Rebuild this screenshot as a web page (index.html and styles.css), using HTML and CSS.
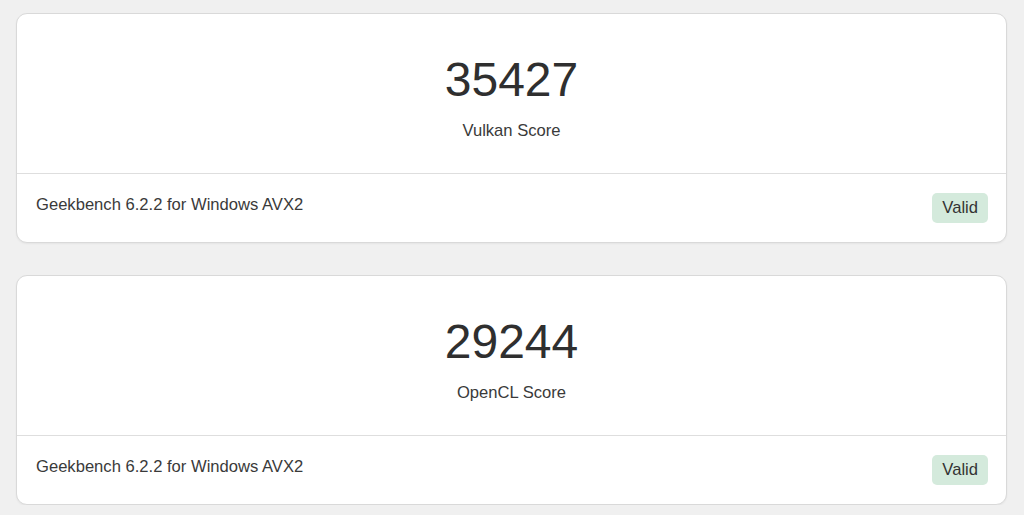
FILE: index.html
```html
<!DOCTYPE html>
<html>
<head>
<meta charset="utf-8">
<link rel="stylesheet" href="styles.css">
</head>
<body>
<div class="page">
  <div class="card">
    <div class="card-head">
      <div class="score">35427</div>
      <div class="label">Vulkan Score</div>
    </div>
    <div class="card-foot">
      <div class="version">Geekbench 6.2.2 for Windows AVX2</div>
      <div class="badge">Valid</div>
    </div>
  </div>
  <div class="card">
    <div class="card-head">
      <div class="score">29244</div>
      <div class="label">OpenCL Score</div>
    </div>
    <div class="card-foot">
      <div class="version">Geekbench 6.2.2 for Windows AVX2</div>
      <div class="badge">Valid</div>
    </div>
  </div>
</div>
</body>
</html>
```

FILE: styles.css
```css
html, body {
  margin: 0;
  padding: 0;
  background: #f0f0f0;
  font-family: "Liberation Sans", Arial, sans-serif;
  color: #333;
}
.page {
  padding: 13px 17px 0 16px;
  display: flex;
  flex-direction: column;
  gap: 32px;
}
.card {
  width: 991px;
  box-sizing: border-box;
  background: #fff;
  border: 1px solid #d9d9d9;
  border-radius: 11px;
  box-shadow: 0 1px 2px rgba(0,0,0,0.05);
}
.card-head {
  padding: 42px 0 32px;
  text-align: center;
  border-bottom: 1px solid #dedede;
}
.score {
  font-size: 48px;
  line-height: 48px;
  color: #2f2f2f;
}
.label {
  margin-top: 17px;
  font-size: 16.6px;
  line-height: 20px;
  color: #3a3a3a;
}
.card-foot {
  display: flex;
  justify-content: space-between;
  align-items: flex-start;
  padding: 19px 18px 19px 19px;
}
.version {
  margin-top: 1px;
  font-size: 16.6px;
  line-height: 22px;
  color: #3a3a3a;
}
.badge {
  background: #d4eadc;
  color: #333;
  font-size: 16.6px;
  line-height: 30px;
  height: 30px;
  padding: 0 10px;
  border-radius: 5px;
}
```
